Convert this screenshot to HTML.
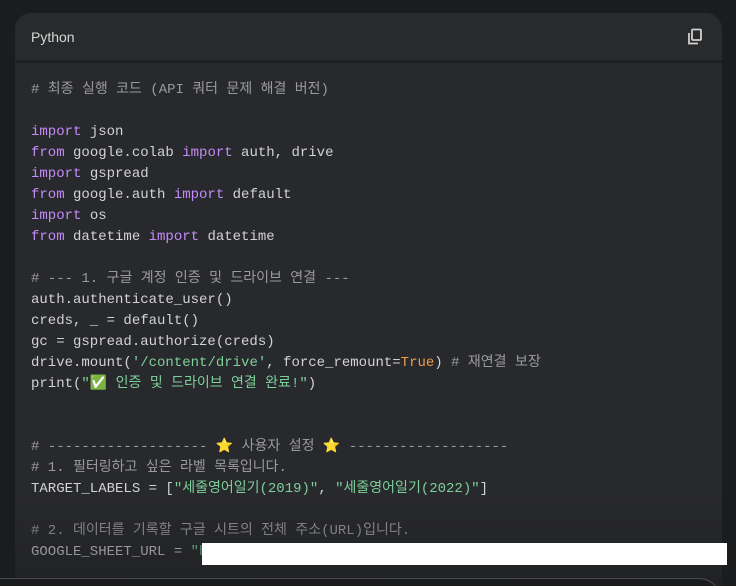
<!DOCTYPE html>
<html><head><meta charset="utf-8"><style>
html,body{margin:0;padding:0;background:#1b1c1e;width:736px;height:586px;overflow:hidden;position:relative}
.card{position:absolute;left:15px;top:13px;width:707px;height:573px;background:#1f2022;border-radius:16px 16px 0 0;overflow:hidden}
.hdr{height:47px;background:#282a2c;display:flex;align-items:center;padding-left:16px;font:500 14px "Liberation Sans",sans-serif;color:#d6d6d6}
.code{position:absolute;top:50px;left:0;right:0;bottom:0;background:#28292c}
pre{margin:0;padding:0;position:absolute;left:16px;top:17px;font:14px/21px "Liberation Mono","Noto Sans CJK KR",monospace;color:#d3d3d3}
.c{color:#9a9a9a}.k{color:#c58af9}.s{color:#7ed09a}.o{color:#f29b4a}
.fade{position:absolute;left:0;right:0;top:495px;height:91px;background:linear-gradient(rgba(27,28,30,0),rgba(27,28,30,0.55))}
.white{position:absolute;left:202px;top:543px;width:525px;height:22px;background:#fff}
.bot{position:absolute;left:-20px;top:578px;width:740px;height:30px;border-top:1px solid #4a4b4e;border-right:1px solid #4a4b4e;border-radius:0 22px 0 0;background:#1b1c1e}
</style></head><body>
<div class="card">
<div class="hdr">Python</div>
<svg style="position:absolute;left:671px;top:15px" width="18" height="18" viewBox="0 0 18 18" fill="none" stroke="#d0d0d0" stroke-width="1.8"><rect x="6" y="1.5" width="9" height="10.5" rx="1"/><path d="M3 5v10.5h9"/></svg>
<div class="code"><pre><span class="c"># 최종 실행 코드 (API 쿼터 문제 해결 버전)</span>

<span class="k">import</span> json
<span class="k">from</span> google.colab <span class="k">import</span> auth, drive
<span class="k">import</span> gspread
<span class="k">from</span> google.auth <span class="k">import</span> default
<span class="k">import</span> os
<span class="k">from</span> datetime <span class="k">import</span> datetime

<span class="c"># --- 1. 구글 계정 인증 및 드라이브 연결 ---</span>
auth.authenticate_user()
creds, _ = default()
gc = gspread.authorize(creds)
drive.mount(<span class="s">'/content/drive'</span>, force_remount=<span class="o">True</span>) <span class="c"># 재연결 보장</span>
print(<span class="s">"✅ 인증 및 드라이브 연결 완료!"</span>)


<span class="c"># ------------------- ⭐ 사용자 설정 ⭐ -------------------</span>
<span class="c"># 1. 필터링하고 싶은 라벨 목록입니다.</span>
TARGET_LABELS = [<span class="s">"세줄영어일기(2019)"</span>, <span class="s">"세줄영어일기(2022)"</span>]

<span class="c"># 2. 데이터를 기록할 구글 시트의 전체 주소(URL)입니다.</span>
GOOGLE_SHEET_URL = <span class="s">"h</span></pre></div>
</div>
<div class="fade"></div>
<div class="white"></div>
<div class="bot"></div>
</body></html>
